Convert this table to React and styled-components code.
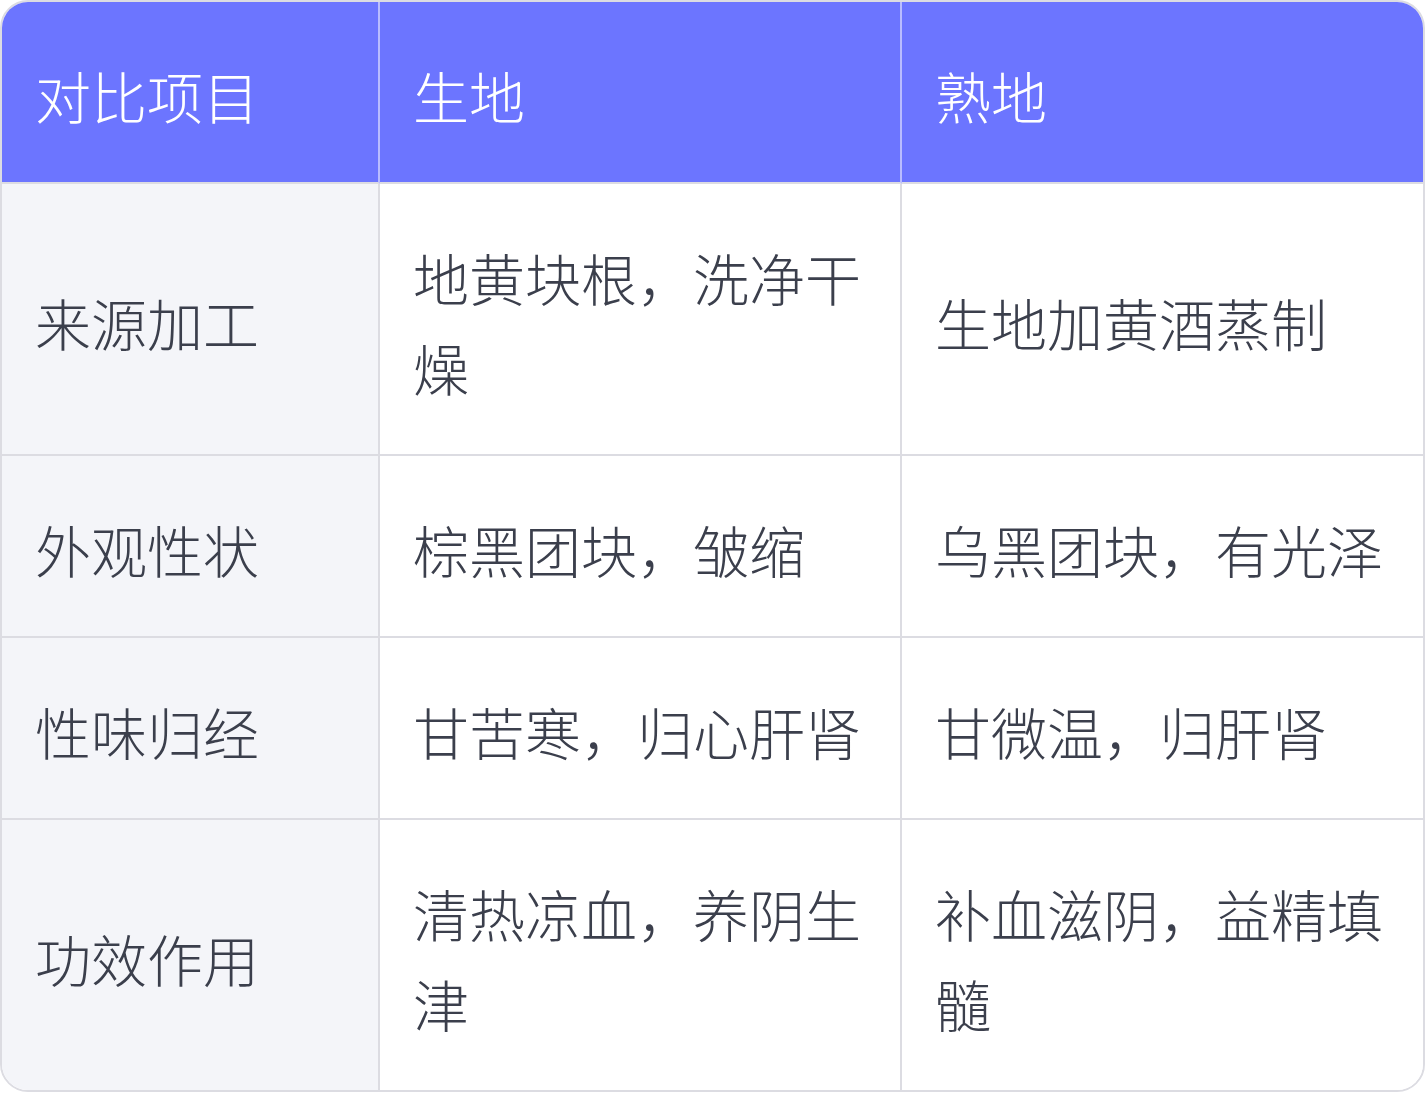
import styled, { createGlobalStyle } from "styled-components";
import React from "react";

const GlobalStyle = createGlobalStyle`
  html, body {
    margin: 0;
    padding: 0;
    background: #ffffff;
  }
  body {
    font-family: "Noto Sans CJK SC", "Noto Sans", sans-serif;
  }
`;

const Table = styled.div`
  width: 1425px;
  box-sizing: border-box;
  border: 2px solid #dcdce2;
  border-radius: 28px;
  overflow: hidden;
  display: grid;
  grid-template-columns: 378px 522px 1fr;
`;

const Cell = styled.div`
  box-sizing: border-box;
  padding: 48px 32px 42px 33px;
  font-size: 56px;
  line-height: 90px;
  font-weight: 300;
  display: flex;
  align-items: center;
  color: ${(p) => (p.head ? "#ffffff" : "#3b3f4c")};
  background: ${(p) => (p.head ? "#6c75ff" : p.first ? "#f4f5f9" : "#ffffff")};
  border-right: ${(p) =>
    p.last ? "none" : p.head ? "2px solid #b9bcff" : "2px solid #dcdce2"};
  border-bottom: ${(p) => (p.bottom ? "none" : "2px solid #dcdce2")};
  word-break: break-all;
`;

const header = ["对比项目", "生地", "熟地"];
const rows = [
  ["来源加工", "地黄块根，洗净干燥", "生地加黄酒蒸制"],
  ["外观性状", "棕黑团块，皱缩", "乌黑团块，有光泽"],
  ["性味归经", "甘苦寒，归心肝肾", "甘微温，归肝肾"],
  ["功效作用", "清热凉血，养阴生津", "补血滋阴，益精填髓"],
];

export default function App() {
  return (
    <>
      <GlobalStyle />
      <Table>
        {header.map((h, i) => (
          <Cell key={h} head first={i === 0} last={i === 2}>
            {h}
          </Cell>
        ))}
        {rows.map((row, r) =>
          row.map((c, i) => (
            <Cell
              key={r + "-" + i}
              first={i === 0}
              last={i === 2}
              bottom={r === rows.length - 1}
            >
              {c}
            </Cell>
          ))
        )}
      </Table>
    </>
  );
}
